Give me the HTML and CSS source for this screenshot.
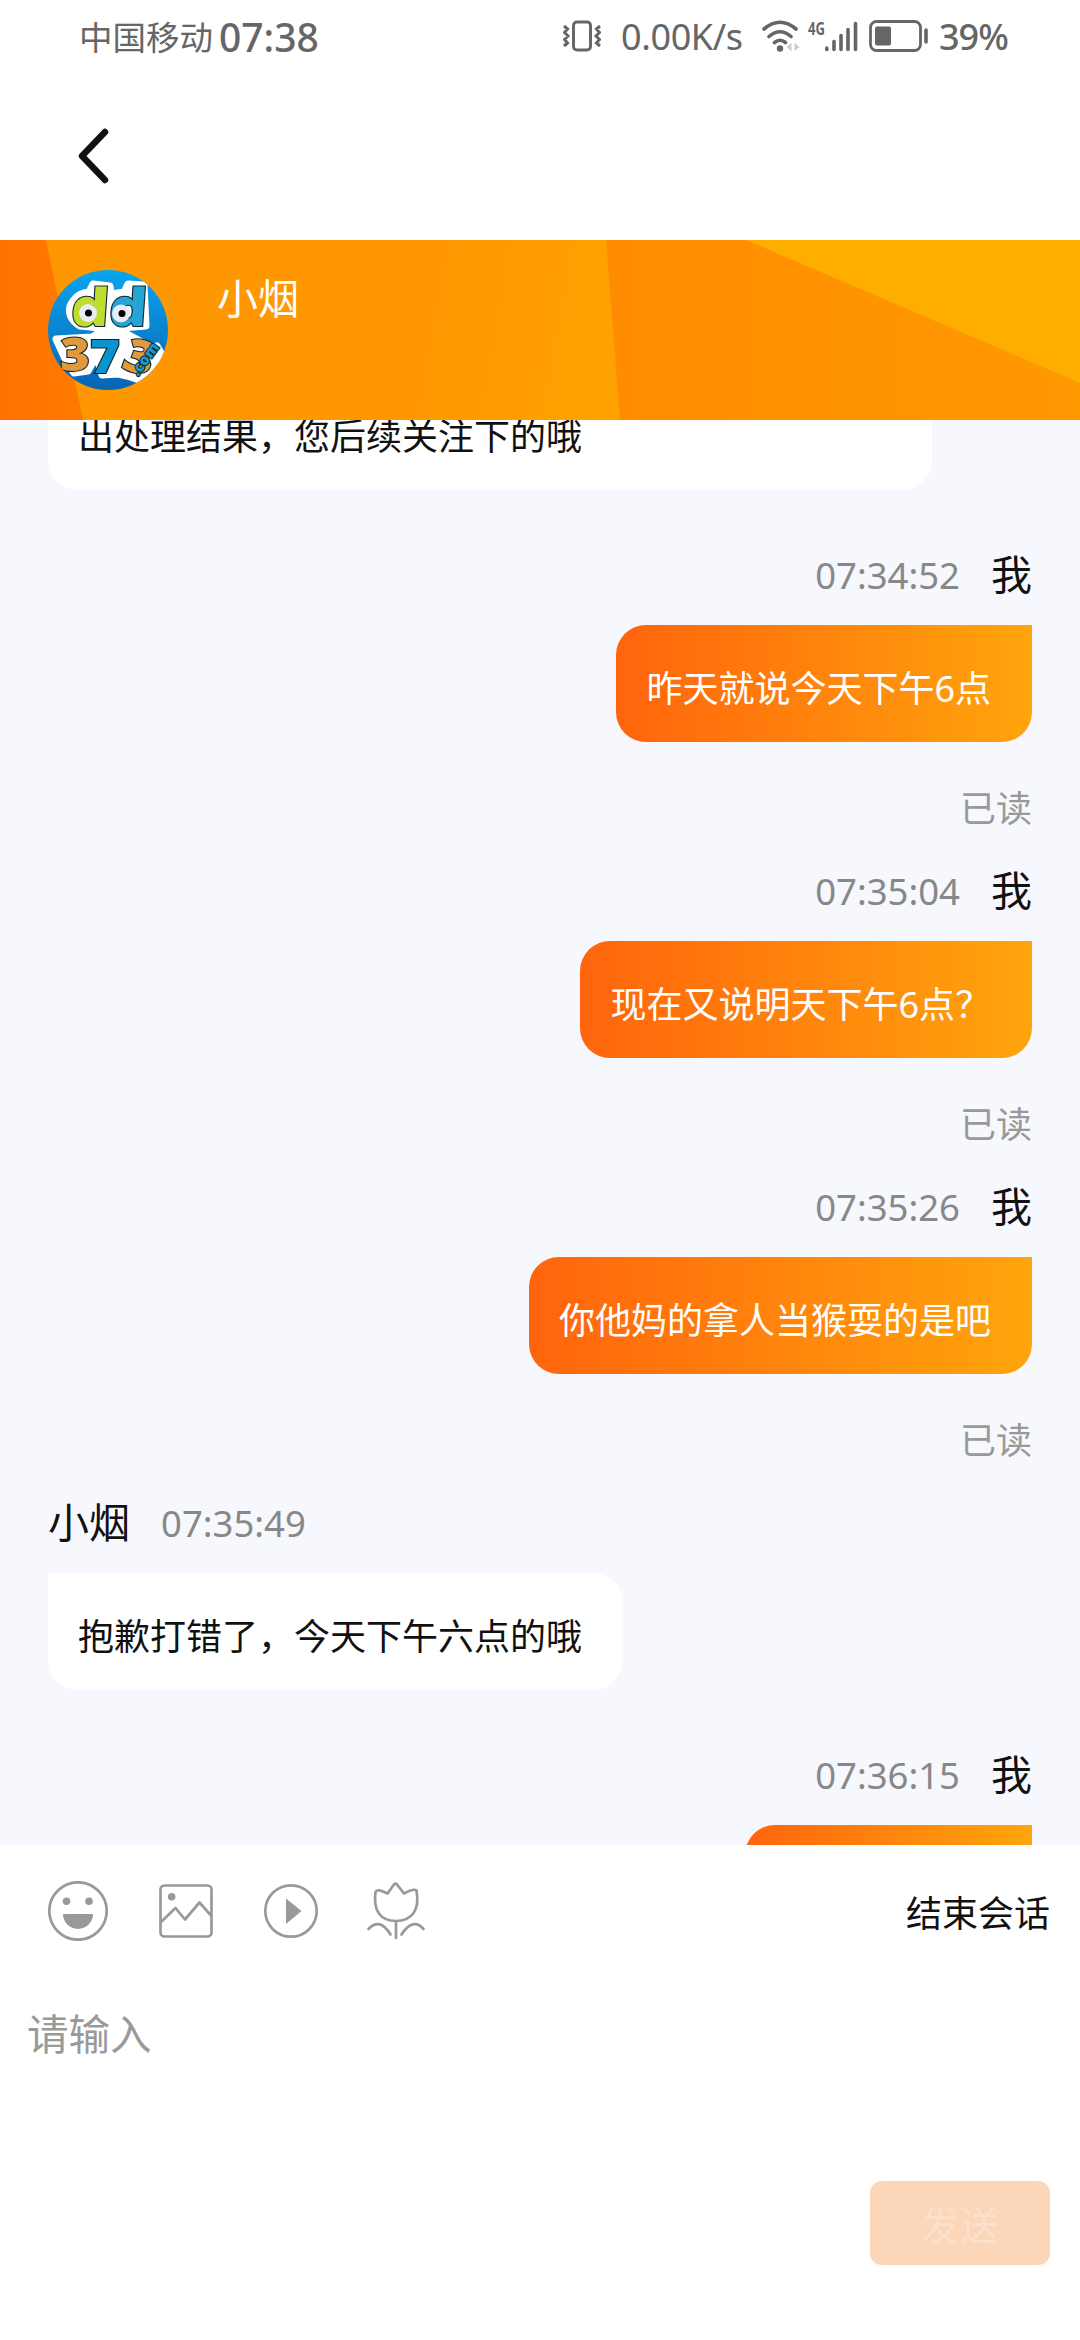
FILE: index.html
```html
<!DOCTYPE html>
<html lang="zh-CN">
<head>
<meta charset="utf-8">
<title>小烟</title>
<link rel="stylesheet" href="styles.css">
</head>
<body>
<div class="screen">
  <header class="status">
    <span class="carrier">中国移动</span>
    <span class="clock">07:38</span>
    <svg class="vibrate" width="38" height="32" viewBox="0 0 38 32" fill="none" stroke="#666" stroke-width="3">
      <rect x="10.5" y="2" width="17" height="28" rx="3.5"/>
      <path d="M1 6l3.500 3-3 3.500 3.500 3.500-3.500 3.500 3 3.500-3.500 3M37 6l-3.500 3 3 3.500-3.500 3.500 3.500 3.500-3 3.500 3.500 3"/>
    </svg>
    <span class="speed">0.00K/s</span>
    <svg class="wifi" width="38" height="32" viewBox="0 0 38 32" fill="none" stroke="#666" stroke-width="3.600" stroke-linecap="round">
      <path d="M2 9Q18 -4.500 34 9M7 16.500q11-9.500 22 0M12.500 22.500q5.500-4.500 11 0"/>
      <circle cx="18" cy="28.500" r="3.200" fill="#666" stroke="none"/>
      <path d="M25 27.500l4-4v7M33 30.500v-7l4 4" fill="#ccc" stroke="#ccc" stroke-width="1"/>
    </svg>
    <svg class="signal" width="50" height="32" viewBox="0 0 50 32">
      <text x="0" y="15" textLength="17" lengthAdjust="spacingAndGlyphs" class="net">4G</text>
      <path d="M18.800 28v1.500M26 21.500v8M33 15.500v14M40 9.500v20M47.500 3.500v26" stroke="#666" stroke-width="3.600" stroke-linecap="round"/>
    </svg>
    <svg class="battery" width="60" height="32" viewBox="0 0 60 32">
      <rect x="1.500" y="1.500" width="50" height="29" rx="6" fill="none" stroke="#666" stroke-width="2.800"/>
      <rect x="6" y="6.500" width="16" height="19" rx="2" fill="#666"/>
      <path d="M57 10v12" stroke="#666" stroke-width="3.600" stroke-linecap="round"/>
    </svg>
    <span class="percent">39%</span>
  </header>

  <nav class="nav">
    <svg width="32" height="56" viewBox="0 0 32 56" fill="none" stroke="#111" stroke-width="6.500" stroke-linecap="round" stroke-linejoin="round"><path d="M28 4L5 28l23 24"/></svg>
  </nav>

  <section class="banner">
    <svg class="avatar" viewBox="0 0 120 120">
      <defs>
        <linearGradient id="sky" x1="0" y1="0" x2="0" y2="1"><stop offset="0" stop-color="#0aa5ee"/><stop offset="1" stop-color="#0864b4"/></linearGradient>
        <clipPath id="round"><circle cx="60" cy="60" r="60"/></clipPath>
      </defs>
      <g clip-path="url(#round)">
        <rect width="120" height="120" fill="url(#sky)"/>
        <g fill="#fff" stroke="#fff" stroke-width="7" stroke-linejoin="round">
          <path d="M22 36Q28 23 41 22L45 14 62 16 63 24 76 22 80 14 96 15 98 56 62 59 32 56Q19 48 22 36Z"/>
          <path d="M8 69L44 67 62 56 70 59 94 72 104 80 109 76 116 88 106 96 91 110 79 106 70 104 54 105 50 91 45 92 40 101 26 103 18 91Z"/>
        </g>
        <g class="logo">
          <text y="56" class="dee" textLength="76" lengthAdjust="spacingAndGlyphs" transform="translate(26 0) skewX(-4)"><tspan fill="#bddd31">d</tspan><tspan fill="#25a5d3">d</tspan></text>
          <text x="12" class="digits" textLength="90" lengthAdjust="spacingAndGlyphs"><tspan y="101" fill="#df9a3d">3</tspan><tspan y="103" fill="#0994cd">7</tspan><tspan y="98" rotate="18" fill="#df9a3d">3</tspan></text>
          <text x="90" y="107" class="com" fill="#159bcc" transform="rotate(-54 90 107)">.com</text>
        </g>
        <g fill="#e9edf2"><circle cx="40" cy="43" r="9"/><circle cx="73" cy="43.500" r="9"/></g>
        <circle cx="40.500" cy="43" r="3.500"/><circle cx="74" cy="43.500" r="3.500"/>
      </g>
    </svg>
    <h1 class="agent">小烟</h1>
  </section>

  <main class="chat">
    <article class="msg first"><p class="bubble wide">出处理结果，您后续关注下的哦</p></article>
    <article class="msg mine"><div class="meta"><time>07:34:52</time><b>我</b></div><p class="bubble">昨天就说今天下午6点</p><span class="read">已读</span></article>
    <article class="msg mine"><div class="meta"><time>07:35:04</time><b>我</b></div><p class="bubble">现在又说明天下午6点？</p><span class="read">已读</span></article>
    <article class="msg mine"><div class="meta"><time>07:35:26</time><b>我</b></div><p class="bubble">你他妈的拿人当猴耍的是吧</p><span class="read">已读</span></article>
    <article class="msg"><div class="meta"><b>小烟</b><time>07:35:49</time></div><p class="bubble">抱歉打错了，今天下午六点的哦</p></article>
    <article class="msg mine"><div class="meta"><time>07:36:15</time><b>我</b></div><p class="bubble last"></p></article>
  </main>

  <footer class="composer">
    <div class="tools">
      <svg class="smile" viewBox="0 0 60 60"><circle cx="30" cy="30" r="28.700" class="line"/><circle cx="18.500" cy="20.300" r="3.800"/><circle cx="41" cy="20.300" r="3.800"/><path d="M15 33h30a15 15 0 0 1-30 0z"/></svg>
      <svg viewBox="0 0 60 60"><rect x="4.500" y="4.500" width="51" height="51" rx="4" class="line"/><circle cx="15.700" cy="15.700" r="3.800"/><path d="M5 41l14.500-14 9.500 11.500L43.500 21.500 55 34.500" class="line"/></svg>
      <svg viewBox="0 0 60 60"><circle cx="30" cy="30" r="25.700" class="line"/><path d="M25 17.500v25.500l15.500-13z"/></svg>
      <svg viewBox="0 0 60 60"><path d="M30 40C14 40 7 29 9.500 11Q11 7 21.500 12.500L28 3.500Q29.500 2 31 3.500L38 12.500Q48 7 50.500 9.500C54 29 46 40 30 40ZM30 40v17M2.500 48Q14 36 24.500 53.500M35.500 53.500Q47 36 57.500 48" class="line"/></svg>
      <button class="end">结束会话</button>
    </div>
    <div class="input">请输入</div>
    <button class="send">发送</button>
  </footer>
</div>
</body>
</html>
```
FILE: styles.css
```css
* { box-sizing: border-box; margin: 0; padding: 0; }

body {
  font-family: "Noto Sans", "Noto Sans CJK SC", sans-serif;
  color: #111;
  background: #fff;
}

button { border: 0; background: none; font: inherit; color: inherit; }

.screen {
  display: flex;
  flex-direction: column;
  width: 1080px;
  height: 2340px;
  overflow: hidden;
}

/* Status bar */
.status {
  display: flex;
  align-items: center;
  height: 74px;
  padding-left: 79px;
  color: #666;
  line-height: 76px;
  white-space: nowrap;
}
.status svg { flex: none; margin-bottom: 2px; }
.carrier { width: 140px; font-size: 33.500px; }
.clock { width: 344px; font-size: 39px; font-weight: 500; }
.speed { width: 141px; margin-left: 20px; font-size: 36px; letter-spacing: -0.4px; }
.signal { margin-left: 8px; }
.battery { margin-left: 11px; }
.percent { margin-left: 10px; font-size: 36px; font-weight: 500; letter-spacing: -1px; }
.net { font: 700 18px "Noto Sans", sans-serif; fill: #666; }

/* Back navigation */
.nav {
  display: flex;
  align-items: center;
  height: 166px;
  padding: 0 0 2px 77px;
}

/* Agent banner */
.banner {
  display: flex;
  position: relative;
  z-index: 0;
  height: 180px;
  padding: 30px 48px;
  background: linear-gradient(100deg, #ff9800 40%, #ffa200 58%);
}
.banner::before,
.banner::after {
  content: "";
  position: absolute;
  inset: 0;
  z-index: -1;
}
.banner::before {
  background: linear-gradient(90deg, #ff7200 0, #ff7a00 83px, #ff8c00 605px, #ff9900 1080px);
  clip-path: polygon(0 0, 46px 0, 83px 180px, 620px 180px, 606px 0, 1080px 0, 1080px 180px, 0 180px);
}
.banner::after {
  background: #ffae00;
  clip-path: polygon(746px 0, 1080px 0, 1080px 143px);
}
.avatar { width: 120px; height: 120px; }
.agent { margin: -2px 0 0 49px; font-size: 41px; font-weight: 400; line-height: 60px; color: #fff; }
.logo text { font-family: "Noto Sans", sans-serif; font-weight: 900; stroke: #102331; stroke-width: 2px; paint-order: stroke; }
.logo .dee { font-size: 52px; }
.logo .digits { font-size: 46px; }
.logo .com { font-size: 15px; }

/* Conversation */
.chat {
  display: flex;
  flex-direction: column;
  height: 1425px;
  padding: 0 48px;
  overflow: hidden;
  background: #f6f8fd;
}
.msg {
  display: flex;
  flex: none;
  flex-direction: column;
  align-items: flex-start;
  margin-bottom: 55px;
}
.mine { align-items: flex-end; margin-bottom: 24px; }
.first { margin: -47px 0 55px; }
.meta {
  display: flex;
  align-items: center;
  gap: 31px;
  height: 60px;
  margin-bottom: 20px;
}
.meta b { font-size: 41px; font-weight: 400; line-height: 58px; height: 60px; }
.meta time { font-size: 36.500px; line-height: 60px; height: 61px; color: #888; }
.bubble {
  height: 117px;
  padding: 8px 41px 0 30px;
  border-radius: 0 30px 30px 30px;
  background: #fff;
  font-size: 36px;
  line-height: 112px;
  white-space: nowrap;
}
.wide { width: 884px; }
.last { width: 287px; }
.mine .bubble {
  border-radius: 30px 0 30px 30px;
  background: linear-gradient(90deg, #ff640d, #ffa50c);
  color: #fff;
}
.read { margin-top: 37px; margin-bottom: -2px; font-size: 36px; line-height: 60px; color: #999; }

/* Composer */
.composer { display: flex; flex: 1; flex-direction: column; }
.tools {
  display: flex;
  align-items: center;
  gap: 45px;
  height: 132px;
  padding: 0 30px 0 48px;
}
.tools svg { width: 60px; height: 60px; fill: #999; }
.tools .smile { margin-right: 3px; }
.tools .line { fill: none; stroke: #999; stroke-width: 2.700px; stroke-linecap: round; stroke-linejoin: round; }
.end { margin-left: auto; font-size: 36px; }
.input { height: 204px; padding: 27px; font-size: 41.500px; line-height: 60px; color: #999; }
.send {
  align-self: flex-end;
  width: 180px;
  height: 84px;
  margin-right: 30px;
  border-radius: 12px;
  background: #fcd6b9;
  font-size: 38.500px;
  color: #fbe0cb;
}
```
